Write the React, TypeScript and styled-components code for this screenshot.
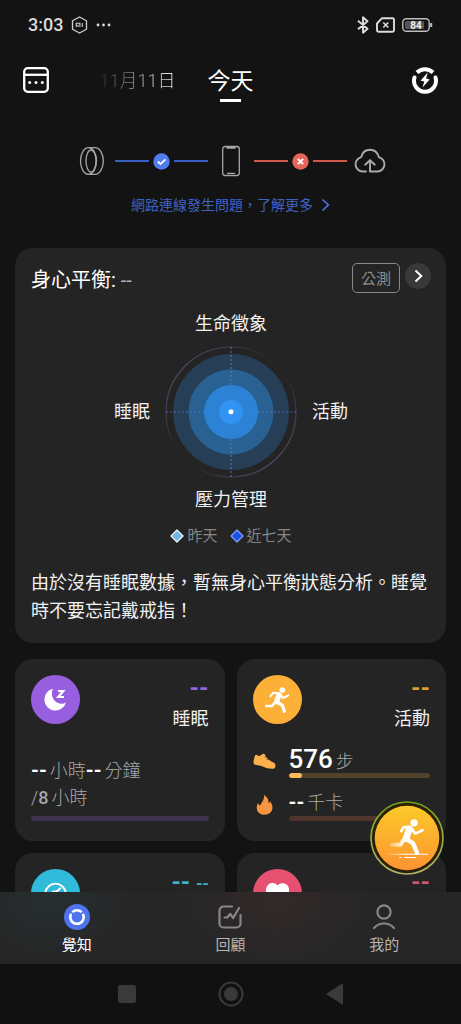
import React from "react";
import styled, { createGlobalStyle } from "styled-components";

const GlobalStyle = createGlobalStyle`
  *, *::before, *::after { box-sizing: border-box; }
  body {
    margin: 0;
    background: #131313;
    color: #f2f2f2;
    font-family: Roboto, "Noto Sans CJK TC", sans-serif;
  }
  button { font: inherit; color: inherit; background: none; border: 0; padding: 0; cursor: pointer; }
  svg { display: block; flex: none; }
  h2, h3, p, ul { margin: 0; padding: 0; font-weight: 400; }
`;

const Screen = styled.div`
  display: flex;
  flex-direction: column;
  height: 100vh;
  overflow: hidden;
`;

const StatusBar = styled.header`
  display: flex;
  align-items: center;
  justify-content: space-between;
  flex: none;
  padding: 13px 28px 11px;
  color: #dcdcdc;
`;

const StatusGroup = styled.div<{ $gap: number }>`
  display: flex;
  align-items: center;
  gap: ${(p) => p.$gap}px;
  height: 24px;
`;

const Clock = styled.time`
  font-size: 18px;
  line-height: 24px;
  font-weight: 500;
`;

const DayBar = styled.nav`
  display: grid;
  grid-template-columns: 1fr auto 1fr;
  column-gap: 32px;
  flex: none;
  height: 64px;
  padding: 16px 22px 0;
`;

const DaySide = styled.div`
  display: flex;
  justify-content: space-between;
  align-items: center;
  height: 32px;
`;

const DaySideEnd = styled(DaySide)`
  justify-content: flex-end;
`;

const PreviousDay = styled.button`
  padding-top: 2px;
  font-size: 18px;
  line-height: 32px;
  font-weight: 300;
  background: linear-gradient(90deg, #2a2a2a, #8c8c8c 45%, #f0f0f0);
  background-clip: text;
  -webkit-background-clip: text;
  color: transparent;
`;

const Today = styled.button`
  display: flex;
  flex-direction: column;
  align-items: center;
  align-self: start;
  padding-top: 2px;
  gap: 1px;
  font-size: 23px;
  line-height: 32px;
  color: #ffffff;

  &::after {
    content: "";
    width: 21px;
    height: 3px;
    background: #ffffff;
  }
`;

const Scroller = styled.main`
  flex: 1;
  min-height: 0;
  overflow-y: auto;
  scrollbar-width: none;
  padding: 0 15px;
`;

const Connection = styled.section`
  display: flex;
  flex-direction: column;
  align-items: center;
  gap: 16px;
  padding: 33px 0 31px;
`;

const Chain = styled.div`
  display: flex;
  align-items: center;
  justify-content: center;
  gap: 7px;
`;

const Link = styled.div<{ $color: string }>`
  display: flex;
  align-items: center;
  gap: 4px;

  &::before, &::after {
    content: "";
    width: 34px;
    height: 2px;
    background: ${(p) => p.$color};
  }
`;

const HelpLink = styled.a`
  display: flex;
  align-items: center;
  gap: 8px;
  font-size: 14px;
  line-height: 24px;
  color: #3f63c4;
  text-decoration: none;
`;

const Card = styled.section`
  background: #242424;
  border-radius: 18px;
`;

const BalanceCard = styled(Card)`
  padding: 15px 15px 18px 16px;
`;

const BalanceHead = styled.div`
  display: flex;
  align-items: center;
  justify-content: space-between;
  height: 30px;
`;

const BalanceTitle = styled.h2`
  padding-top: 5px;
  font-size: 20px;
  line-height: 25px;
  color: #ffffff;

  span { color: #b4b4b4; }
`;

const BalanceActions = styled.div`
  display: flex;
  align-items: flex-start;
  gap: 5px;
`;

const BetaTag = styled.span`
  height: 30px;
  padding: 0 8px;
  border: 1px solid #8a8a8a;
  border-radius: 5px;
  font-size: 15px;
  line-height: 31px;
  color: #8e8e8e;
`;

const RoundButton = styled.button`
  display: grid;
  place-items: center;
  width: 26px;
  height: 26px;
  border-radius: 50%;
  background: #383838;
`;

const Compass = styled.div`
  display: flex;
  flex-direction: column;
  align-items: center;
  gap: 9px;
  padding-top: 18px;
`;

const CompassRow = styled.div`
  display: flex;
  align-items: center;
  gap: 15px;
`;

const AxisLabel = styled.span`
  font-size: 18px;
  line-height: 26px;
`;

const Legend = styled.ul`
  display: flex;
  justify-content: center;
  gap: 12px;
  padding-top: 12px;
  list-style: none;
`;

const LegendItem = styled.li`
  display: flex;
  align-items: center;
  gap: 3px;
  font-size: 15px;
  line-height: 22px;
  color: #858585;
`;

const Summary = styled.p`
  padding-top: 22px;
  font-size: 18px;
  line-height: 28px;
`;

const Tiles = styled.div`
  display: grid;
  grid-template-columns: 1fr 1fr;
  gap: 12px;
  padding-top: 16px;
`;

const Tile = styled(Card)`
  display: flex;
  flex-direction: column;
  justify-content: space-between;
  gap: 14px;
  min-height: 182px;
  padding: 16px 16px 20px;
`;

const TileHead = styled.div`
  display: flex;
  justify-content: space-between;
  height: 56px;
`;

const Disc = styled.span<{ $color: string }>`
  display: grid;
  place-items: center;
  width: 49px;
  height: 49px;
  border-radius: 50%;
  background: ${(p) => p.$color};
`;

const TileScore = styled.div`
  display: flex;
  flex-direction: column;
  align-items: flex-end;
  gap: 5px;
`;

const Score = styled.span<{ $color: string }>`
  font-size: 24px;
  line-height: 26px;
  font-weight: 700;
  color: ${(p) => p.$color};

  small { font-size: 18px; font-weight: 500; }
`;

const TileName = styled.h3`
  font-size: 18px;
  line-height: 26px;
`;

const Reading = styled.p`
  display: flex;
  align-items: baseline;
  height: 28px;
  font-size: 18px;
  line-height: 28px;
  font-weight: 300;
  color: #a8a8a8;
  white-space: nowrap;

  b { font-weight: 500; margin-right: 3px; }
`;

const Blank = styled.b`
  font-size: 20px;
  color: #ffffff;

  && { font-weight: 700; }
`;

const Count = styled.b`
  font-size: 26px;
  color: #ffffff;
`;

const Track = styled.div<{ $color: string }>`
  height: 5px;
  border-radius: 3px;
  background: ${(p) => p.$color};
  overflow: hidden;
`;

const Fill = styled.div`
  height: 5px;
  border-radius: 3px;
  background: #fdb95a;
`;

const SleepTrack = styled(Track)`
  margin-top: 4px;
`;

const Metrics = styled.div`
  display: flex;
  flex-direction: column;
  gap: 10px;
`;

const Metric = styled.div`
  display: grid;
  grid-template-columns: 24px 1fr;
  column-gap: 12px;
  align-items: center;
`;

const Bottom = styled.footer`
  position: relative;
  flex: none;
`;

const WorkoutButton = styled.button`
  position: absolute;
  right: 17px;
  bottom: calc(100% + 17px);
`;

const TabBar = styled.nav`
  display: grid;
  grid-template-columns: repeat(3, 1fr);
  height: 72px;
  background:
    radial-gradient(ellipse 80px 60px at 11% 10%, rgba(40, 80, 95, 0.2), transparent),
    radial-gradient(ellipse 100px 70px at 60% 10%, rgba(96, 50, 52, 0.22), transparent),
    #262626;
`;

const Tab = styled.button<{ $active?: boolean }>`
  display: flex;
  flex-direction: column;
  align-items: center;
  gap: 4px;
  padding-top: 12px;
  font-size: 15px;
  line-height: 22px;
  color: ${(p) => (p.$active ? "#ffffff" : "#b4b4b4")};
`;

const SystemBar = styled.div`
  display: flex;
  align-items: center;
  justify-content: center;
  gap: 78px;
  height: 60px;
  background: #111111;
`;

const Chevron = ({ w = 9, h = 14, color = "#fff", stroke = 2 }) => (
  <svg width={w} height={h} viewBox="0 0 9 14" fill="none" stroke={color} strokeWidth={stroke}>
    <path d="M1.5 1.5 7.3 7l-5.8 5.5" />
  </svg>
);

const Diamond = ({ fill, edge }: { fill: string; edge: string }) => (
  <svg width="14" height="14" viewBox="0 0 14 14">
    <path d="M7 1 13 7 7 13 1 7Z" fill={fill} stroke={edge} strokeWidth="1.4" strokeLinejoin="round" />
  </svg>
);

const Dial = () => (
  <svg width="132" height="132" viewBox="0 0 132 132" fill="none">
    <defs>
      <linearGradient id="rim" x1="0" y1="0" x2="1" y2="1">
        <stop offset="0.1" stopColor="#50506a" />
        <stop offset="0.42" stopColor="#50506a" stopOpacity="0.05" />
        <stop offset="0.58" stopColor="#50506a" stopOpacity="0.05" />
        <stop offset="0.9" stopColor="#50506a" />
      </linearGradient>
    </defs>
    <circle cx="66" cy="66" r="65" stroke="url(#rim)" strokeWidth="1.2" />
    <circle cx="66" cy="66" r="58" fill="#263f57" />
    <circle cx="66" cy="66" r="42.5" fill="#286192" />
    <path d="M66 1v130M1 66h130" stroke="#6478c8" strokeWidth="1.2" strokeDasharray="2 2" opacity="0.75" />
    <circle cx="66" cy="66" r="27" fill="#2c87de" opacity="0.9" />
    <circle cx="66" cy="66" r="12" fill="#3193f3" />
    <circle cx="66" cy="65.7" r="2.5" fill="#fff" />
  </svg>
);

const Runner = () => (
  <svg width="49" height="49" viewBox="0 0 147 147" fill="none" stroke="#fff" strokeLinecap="round" strokeLinejoin="round">
    <circle cx="88" cy="45" r="8.5" fill="#fff" stroke="none" />
    <path d="M78 60 71 80" strokeWidth="16" />
    <path d="M76 55 61 53 52 64M82 58l8 11 16-8" strokeWidth="6" />
    <path d="M68 80 57 93 40 93" strokeWidth="8" />
    <path d="M72 81 88 91 94 109" strokeWidth="10" />
  </svg>
);

const WorkoutArt = () => (
  <svg width="74" height="74" viewBox="0 0 220 220" fill="none" strokeLinecap="round" strokeLinejoin="round">
    <defs>
      <linearGradient id="sun" x1="0" y1="0" x2="0" y2="1">
        <stop offset="0" stopColor="#fbc928" />
        <stop offset="1" stopColor="#fd9432" />
      </linearGradient>
      <linearGradient id="halo" x1="0" y1="0" x2="0" y2="1">
        <stop offset="0" stopColor="#75a517" />
        <stop offset="1" stopColor="#b5b26a" />
      </linearGradient>
      <linearGradient id="trail" gradientUnits="userSpaceOnUse" x1="58" y1="0" x2="104" y2="0">
        <stop offset="0" stopColor="#fff" stopOpacity="0.2" />
        <stop offset="1" stopColor="#fff" />
      </linearGradient>
      <linearGradient id="ground" gradientUnits="userSpaceOnUse" x1="49" y1="0" x2="110" y2="0">
        <stop offset="0" stopColor="#fff" stopOpacity="0.1" />
        <stop offset="1" stopColor="#fff" />
      </linearGradient>
    </defs>
    <circle cx="110" cy="110" r="107" fill="#2a2107" stroke="url(#halo)" strokeWidth="5" />
    <circle cx="110" cy="110" r="96" fill="url(#sun)" />
    <g stroke="#fff">
      <circle cx="131" cy="65" r="11" fill="#fff" stroke="none" />
      <path d="M117 83 107 112" strokeWidth="20" />
      <path d="M114 77 100 78 93 90M124 83l11 14 21-10" strokeWidth="8" />
      <path d="M108 113 128 126 140 154" strokeWidth="13" />
      <path d="M103 112 90 130 64 130" stroke="url(#trail)" strokeWidth="12" />
      <path d="M49 158.500 171 158" stroke="url(#ground)" strokeWidth="3" />
      <path d="M103 168h32M88 168h4" strokeWidth="3" />
    </g>
  </svg>
);

const RingIcon = () => (
  <svg width="32" height="32" viewBox="0 0 32 32" fill="none" stroke="#a6a6a6" strokeWidth="1.3">
    <ellipse cx="12.500" cy="16" rx="8" ry="13.3" />
    <ellipse cx="15" cy="16" rx="5" ry="11" />
    <path d="M12.500 2.700h6.500c4.600 0 8.300 6 8.300 13.300s-3.700 13.300-8.300 13.300h-6.500" />
  </svg>
);

const PhoneIcon = () => (
  <svg width="32" height="32" viewBox="0 0 32 32" fill="none" stroke="#a6a6a6" strokeWidth="1.3">
    <rect x="7.700" y="1.500" width="16.600" height="29" rx="2.500" />
    <path d="M12 2h8v1h-8zM12 28.300h8" />
  </svg>
);

const CloudIcon = () => (
  <svg width="32" height="32" viewBox="0 0 32 32" fill="none" stroke="#ababab" strokeWidth="1.9" strokeLinecap="round" strokeLinejoin="round">
    <path d="M12 26.500H8.500a7.300 7.300 0 0 1-1.300-14.400C8.300 7.300 11.800 4.700 16 4.700s7.600 2.700 8.800 7.400a7.300 7.300 0 0 1-1.300 14.400H16V15.500" />
    <path d="m11.200 19.700 4.800-4.500 4.800 4.500" />
  </svg>
);

const App = () => (
  <Screen>
    <GlobalStyle />
    <StatusBar>
      <StatusGroup $gap={8}>
        <Clock>3:03</Clock>
        <svg width="17" height="18" viewBox="0 0 17 18" fill="none" stroke="#cfcfcf">
          <path d="M8.500 1 15.500 4.800v8.400L8.500 17l-7-3.800V4.800Z" strokeWidth="1.300" strokeLinejoin="round" />
          <path d="M5.200 11V7.300h3.700V11M7 8.700V11M11.300 7v4" strokeWidth="1.100" />
        </svg>
        <svg width="15" height="4" viewBox="0 0 15 4" fill="#dcdcdc">
          <circle cx="2" cy="2" r="1.400" />
          <circle cx="7.500" cy="2" r="1.400" />
          <circle cx="13" cy="2" r="1.400" />
        </svg>
      </StatusGroup>
      <StatusGroup $gap={7}>
        <svg width="12" height="18" viewBox="0 0 12 18" fill="none" stroke="#dcdcdc" strokeWidth="1.900" strokeLinejoin="round">
          <path d="M1 4.800 10.500 12.800 6 16.700V1.300l4.500 3.900L1 13.200" />
        </svg>
        <svg width="19" height="16" viewBox="0 0 19 16" fill="none" stroke="#dcdcdc">
          <path d="M6 1.200h10.500a1.500 1.500 0 0 1 1.500 1.500v10.600a1.500 1.500 0 0 1-1.500 1.500H2.500A1.500 1.500 0 0 1 1 13.300V6.500Z" strokeWidth="1.900" strokeLinejoin="round" />
          <path d="m7.300 5.500 5 5m0-5-5 5" strokeWidth="1.700" />
        </svg>
        <svg width="31" height="14" viewBox="0 0 31 14" fill="none">
          <rect x="0.800" y="0.800" width="26.400" height="12.400" rx="3.500" stroke="#bdbdbd" strokeWidth="1.400" />
          <rect x="3" y="3" width="19" height="8" rx="1.500" fill="#555" />
          <path d="M29.200 5v4" stroke="#bdbdbd" strokeWidth="2" />
          <text x="14" y="10.500" textAnchor="middle" fontSize="10" fontWeight="700" fill="#f0f0f0">84</text>
        </svg>
      </StatusGroup>
    </StatusBar>

    <DayBar>
      <DaySide>
        <button aria-label="日曆">
          <svg width="28" height="28" viewBox="0 0 28 28" fill="none" stroke="#fff" strokeWidth="2.300">
            <rect x="2.200" y="2.200" width="23.600" height="23.600" rx="3.500" />
            <path d="M2 8.800h24" />
            <g fill="#fff" stroke="none">
              <circle cx="7.700" cy="16.500" r="1.500" />
              <circle cx="14" cy="16.500" r="1.500" />
              <circle cx="20.300" cy="16.500" r="1.500" />
            </g>
          </svg>
        </button>
        <PreviousDay>11月11日</PreviousDay>
      </DaySide>
      <Today>今天</Today>
      <DaySideEnd>
        <button aria-label="戒指電量">
          <svg width="28" height="28" viewBox="0 0 28 28" fill="none" stroke="#fff" strokeWidth="4">
            <path d="M6 6.500a11.200 11.200 0 0 1 16 0" strokeLinecap="butt" />
            <path d="M3.500 11.500a11 11 0 1 0 21 0" strokeLinecap="round" />
            <path d="M16.800 6.500 9.500 14.800l3.800.8-1.800 6 7.200-8.200-3.600-1Z" fill="#fff" stroke="none" />
          </svg>
        </button>
      </DaySideEnd>
    </DayBar>

    <Scroller>
      <Connection>
        <Chain>
          <RingIcon />
          <Link $color="#3a5fc4">
            <svg width="17" height="17" viewBox="0 0 17 17" fill="none">
              <circle cx="8.500" cy="8.500" r="8.200" fill="#4f7df0" />
              <path d="m4.800 8.500 2.700 2.600 4.900-4.700" stroke="#fff" strokeWidth="1.800" />
            </svg>
          </Link>
          <PhoneIcon />
          <Link $color="#cf5a4c">
            <svg width="17" height="17" viewBox="0 0 17 17" fill="none">
              <circle cx="8.500" cy="8.500" r="8.200" fill="#e8655a" />
              <path d="m5.800 5.800 5.400 5.400m0-5.400-5.400 5.400" stroke="#fff" strokeWidth="1.900" />
            </svg>
          </Link>
          <CloudIcon />
        </Chain>
        <HelpLink href="#help">
          網路連線發生問題，了解更多
          <Chevron color="#4a72e0" stroke={1.7} />
        </HelpLink>
      </Connection>

      <BalanceCard>
        <BalanceHead>
          <BalanceTitle>
            身心平衡: <span>--</span>
          </BalanceTitle>
          <BalanceActions>
            <BetaTag>公測</BetaTag>
            <RoundButton aria-label="查看身心平衡">
              <Chevron />
            </RoundButton>
          </BalanceActions>
        </BalanceHead>
        <Compass>
          <AxisLabel>生命徵象</AxisLabel>
          <CompassRow>
            <AxisLabel>睡眠</AxisLabel>
            <Dial />
            <AxisLabel>活動</AxisLabel>
          </CompassRow>
          <AxisLabel>壓力管理</AxisLabel>
        </Compass>
        <Legend>
          <LegendItem>
            <Diamond fill="#6fb6e4" edge="#e8f2f8" />
            昨天
          </LegendItem>
          <LegendItem>
            <Diamond fill="#1d50e8" edge="#7f9cf0" />
            近七天
          </LegendItem>
        </Legend>
        <Summary>由於沒有睡眠數據，暫無身心平衡狀態分析。睡覺時不要忘記戴戒指！</Summary>
      </BalanceCard>

      <Tiles>
        <Tile>
          <TileHead>
            <Disc $color="#985ee0">
              <svg width="49" height="49" viewBox="0 0 49 49" fill="none">
                <path d="M21.800 13.800a11 11 0 1 0 13.200 13.400 7.500 7.500 0 0 1-5.500 1.500c-6.500-.700-10.500-8-7.700-14.900Z" fill="#fff" />
                <path d="M27 16h5.300l-5 6h5.700" stroke="#fff" strokeWidth="2.200" />
              </svg>
            </Disc>
            <TileScore>
              <Score $color="#9566dd">--</Score>
              <TileName>睡眠</TileName>
            </TileScore>
          </TileHead>
          <div>
            <Reading>
              <Blank>--</Blank>小時<Blank>--</Blank>分鐘
            </Reading>
            <Reading>
              /<b>8</b>小時
            </Reading>
            <SleepTrack $color="#3f3350" />
          </div>
        </Tile>

        <Tile>
          <TileHead>
            <Disc $color="#fcb038">
              <Runner />
            </Disc>
            <TileScore>
              <Score $color="#dda038">--</Score>
              <TileName>活動</TileName>
            </TileScore>
          </TileHead>
          <Metrics>
            <Metric>
              <svg width="24" height="18" viewBox="0 0 24 18" fill="#fbb04e">
                <path d="M2 2.500c.300-.900 1.300-1.100 1.900-.500 1.500 1.500 3.500 1.300 5-.4.700-.9 2.200-1 2.900-.1l1 1.700-1.300 1.300 2.100-.3 1 1.200-1.300 1.200 2.300-.2c1.500 1.300 3 2.200 4.900 3.100 1.600.8 2.200 2.200 1.900 3.900-.2 1.500-1.300 2.300-3 2.300-4.700-.1-7.400-1-10.200-2.400C6.700 12.100 3.500 12.400.7 11 .1 8 1.300 5.500 2 2.500Z" />
              </svg>
              <div>
                <Reading>
                  <Count>576</Count>步
                </Reading>
                <Track $color="#51432b">
                  <Fill style={{ width: `${(576 / 6000) * 100}%` }} />
                </Track>
              </div>
            </Metric>
            <Metric>
              <svg width="24" height="22" viewBox="0 0 24 22" fill="#fa9440">
                <path d="M11 1c4 2.600 4.800 5.200 4.600 8.200.8-.4 1.300-1.100 1.500-2 1.400 2 2.400 4.100 2.400 6.300 0 4.200-3.400 7.200-8 7.200s-7.800-3-7.800-7.300c0-1.500.4-3 1.300-4.500.4 1.500 1.300 2.300 2.400 2.400C7.700 9 11.600 7 11 1Z" />
              </svg>
              <div>
                <Reading>
                  <Blank>--</Blank>千卡
                </Reading>
                <Track $color="#4f352b" />
              </div>
            </Metric>
          </Metrics>
        </Tile>

        <Tile>
          <TileHead>
            <Disc $color="#31bbda">
              <svg width="49" height="49" viewBox="0 0 49 49" fill="none" stroke="#fff" strokeWidth="1.800">
                <path d="M16.500 31.500a10.300 10.300 0 1 1 16 0" />
                <path d="m24.500 23.500 4.500-4" strokeWidth="2.200" strokeLinecap="round" />
                <circle cx="23.500" cy="24.500" r="2" />
              </svg>
            </Disc>
            <TileScore>
              <Score $color="#3fb0c8">
                -- <small>--</small>
              </Score>
            </TileScore>
          </TileHead>
        </Tile>

        <Tile>
          <TileHead>
            <Disc $color="#e65172">
              <svg width="49" height="49" viewBox="0 0 49 49" fill="#fff">
                <path d="M24.500 16.500c2.500-3 7-3 9.500-.500s2.800 6.500.500 9.500l-10 10.500-10-10.500c-2.300-3-2-6.800.500-9.500s7-2.500 9.500.500Z" />
              </svg>
            </Disc>
            <TileScore>
              <Score $color="#cf5577">--</Score>
            </TileScore>
          </TileHead>
        </Tile>
      </Tiles>
    </Scroller>

    <Bottom>
      <WorkoutButton aria-label="開始運動">
        <WorkoutArt />
      </WorkoutButton>
      <TabBar>
        <Tab $active>
          <svg width="26" height="26" viewBox="0 0 26 26" fill="none" stroke="#fff" strokeWidth="2.500">
            <circle cx="13" cy="13" r="13" fill="#4f74ee" stroke="none" />
            <path d="M8.300 8.200a6.800 6.800 0 0 1 9.400 0" />
            <path d="M6.700 10.800a6.700 6.700 0 1 0 12.600 0" strokeLinecap="round" />
          </svg>
          覺知
        </Tab>
        <Tab>
          <svg width="26" height="26" viewBox="0 0 26 26" fill="none" stroke="#85858a" strokeWidth="2.200" strokeLinecap="round" strokeLinejoin="round">
            <path d="M15 2.500H6.500a4 4 0 0 0-4 4v13a4 4 0 0 0 4 4h13a4 4 0 0 0 4-4V11" />
            <path d="M7.500 13.500h2.800l2.900-3.700 3 4.200L22 4" />
          </svg>
          回顧
        </Tab>
        <Tab>
          <svg width="26" height="26" viewBox="0 0 26 26" fill="none" stroke="#85858a" strokeWidth="2.200" strokeLinecap="round">
            <circle cx="13" cy="8" r="6.600" />
            <path d="M3 24c2.600-3 6-4.500 10-4.500s7.400 1.500 10 4.500" />
          </svg>
          我的
        </Tab>
      </TabBar>
      <SystemBar>
        <svg width="26" height="26" viewBox="0 0 26 26" fill="#3a3a3a">
          <rect x="4" y="4" width="18" height="18" rx="2.500" />
        </svg>
        <svg width="26" height="26" viewBox="0 0 26 26" fill="#3a3a3a">
          <circle cx="13" cy="13" r="11.500" fill="none" stroke="#3a3a3a" strokeWidth="2" />
          <circle cx="13" cy="13" r="7" />
        </svg>
        <svg width="26" height="26" viewBox="0 0 26 26" fill="#3a3a3a">
          <path d="M21 2v22L4 13Z" />
        </svg>
      </SystemBar>
    </Bottom>
  </Screen>
);

export default App;
